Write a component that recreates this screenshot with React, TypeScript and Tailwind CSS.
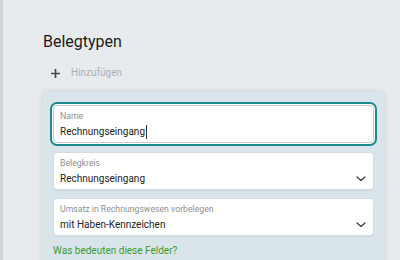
type SelectFieldProps = {
  label: string;
  value: string;
};

function Chevron() {
  return (
    <svg className="absolute right-[7px] top-[23px]" width="10" height="6" viewBox="0 0 10 6" fill="none">
      <path d="M1 1l4 3.5L9 1" stroke="#3d3d3d" strokeWidth="1.3" strokeLinecap="round" strokeLinejoin="round" />
    </svg>
  );
}

function SelectField({ label, value }: SelectFieldProps) {
  return (
    <div className="relative h-[38px] rounded-[4px] border border-[#d3dce1] bg-white px-[6px] pt-[4px] shadow-[0_1px_1px_rgba(0,0,0,0.06)]">
      <p className="text-[8.7px] leading-[12px] text-[#8c9196]">{label}</p>
      <p className="mt-[2px] text-[10px] leading-[16px] text-[#232323]">{value}</p>
      <Chevron />
    </div>
  );
}

export default function App() {
  return (
    <div
      className="flex h-[260px] w-[400px] overflow-hidden bg-[#e8ebee] text-[#222]"
      style={{ fontFamily: 'Roboto, "Noto Sans", sans-serif' }}
    >
      <div className="w-[3px] shrink-0 bg-[#d3d6d9]" />
      <div className="flex-1 pl-[40px] pr-[16px] pt-[31px]">
        <h1 className="text-[16px] font-normal leading-[22px] text-[#1b1b1b]">Belegtypen</h1>
        <div className="mt-[12px] flex items-center gap-[11px] pl-[8px]">
          <svg width="9" height="9" viewBox="0 0 9 9">
            <path d="M4.5 0v9M0 4.5h9" stroke="#4a4a4a" strokeWidth="1.7" />
          </svg>
          <span className="text-[10px] leading-[16px] text-[#aab0b5]">Hinzufügen</span>
        </div>
        <div className="mt-[11px] rounded-[5px] bg-[#d9e5eb] px-[10px] pb-[12px] pt-[13px] shadow-[0_0_6px_rgba(0,0,0,0.12)]">
          <div className="h-[38px] rounded-[4px] border border-[#c6cdd1] bg-white px-[6px] pt-[4px] ring-2 ring-[#1f8a8c] ring-offset-1">
            <p className="text-[8.7px] leading-[12px] text-[#8c9196]">Name</p>
            <p className="mt-[2px] flex items-center text-[10px] leading-[16px] text-[#232323]">
              Rechnungseingang
              <span className="ml-[1px] inline-block h-[14px] w-[1px] bg-[#333]" />
            </p>
          </div>
          <div className="mt-[9px] flex flex-col gap-[8px]">
            <SelectField label="Belegkreis" value="Rechnungseingang" />
            <SelectField label="Umsatz in Rechnungswesen vorbelegen" value="mit Haben-Kennzeichen" />
          </div>
          <p className="mt-[7px] text-[10px] leading-[16px] text-[#3c9a2f]">Was bedeuten diese Felder?</p>
        </div>
      </div>
    </div>
  );
}
